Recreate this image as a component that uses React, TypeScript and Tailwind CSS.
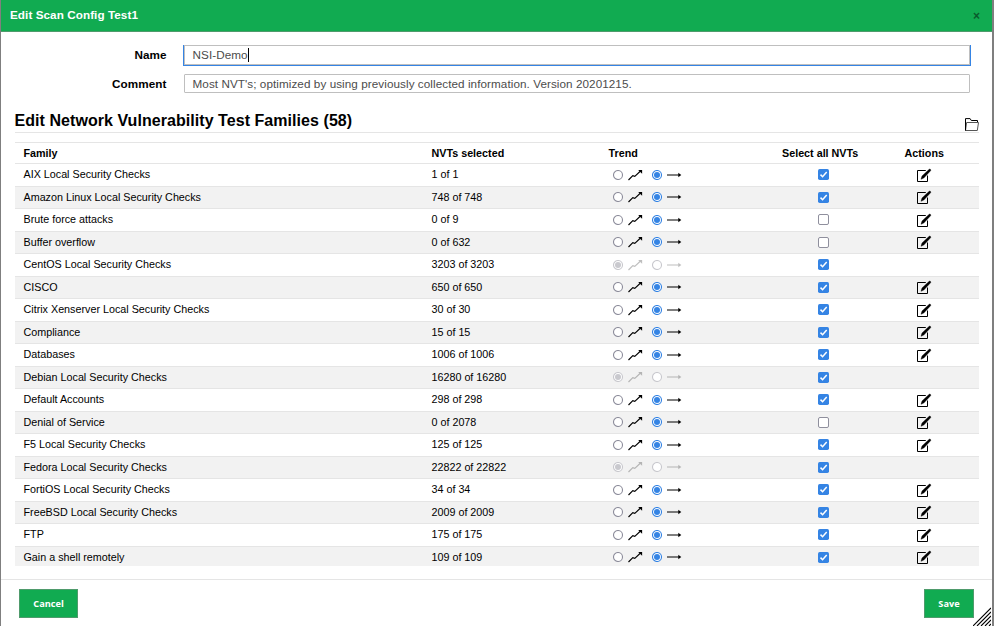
import React from 'react';

type Family = { name: string; count: string; locked?: boolean; all: boolean };

const f = (name: string, count: string, all = true, locked = false): Family => ({ name, count, all, locked });

const families: Family[] = [
  f('AIX Local Security Checks', '1 of 1'),
  f('Amazon Linux Local Security Checks', '748 of 748'),
  f('Brute force attacks', '0 of 9', false),
  f('Buffer overflow', '0 of 632', false),
  f('CentOS Local Security Checks', '3203 of 3203', true, true),
  f('CISCO', '650 of 650'),
  f('Citrix Xenserver Local Security Checks', '30 of 30'),
  f('Compliance', '15 of 15'),
  f('Databases', '1006 of 1006'),
  f('Debian Local Security Checks', '16280 of 16280', true, true),
  f('Default Accounts', '298 of 298'),
  f('Denial of Service', '0 of 2078', false),
  f('F5 Local Security Checks', '125 of 125'),
  f('Fedora Local Security Checks', '22822 of 22822', true, true),
  f('FortiOS Local Security Checks', '34 of 34'),
  f('FreeBSD Local Security Checks', '2009 of 2009'),
  f('FTP', '175 of 175'),
  f('Gain a shell remotely', '109 of 109'),
];

function Radio({ on, disabled }: { on: boolean; disabled?: boolean }) {
  const color = disabled ? '#c9c9ce' : on ? '#3584e4' : '#8f8f9d';
  return (
    <svg width="10" height="10" viewBox="0 0 10 10" className="block shrink-0">
      <circle cx="5" cy="5" r="4.5" fill="#fff" stroke={color} strokeWidth="1.1" />
      {on && <circle cx="5" cy="5" r="3" fill={color} />}
    </svg>
  );
}

function TrendUp({ faded }: { faded?: boolean }) {
  return (
    <svg width="15" height="12" viewBox="0 0 15 12" className={`block shrink-0 ${faded ? 'opacity-25' : ''}`}>
      <path d="M.5 11 4.8 6.6 6.8 7.4 12.5 2" fill="none" stroke="#000" strokeWidth="1.15" />
      <path d="M10.2.9h3.9v3.9z" fill="#000" />
    </svg>
  );
}

function TrendFlat({ faded }: { faded?: boolean }) {
  return (
    <svg width="15" height="6" viewBox="0 0 15 6" className={`block shrink-0 ${faded ? 'opacity-25' : ''}`}>
      <path d="M0 3h13" stroke="#000" strokeWidth="1" />
      <path d="M11.3.8 14.3 3l-3 2.2z" fill="#000" />
    </svg>
  );
}

function Check({ on }: { on: boolean }) {
  return (
    <svg width="11" height="11" viewBox="0 0 11 11" className="block shrink-0">
      {on ? (
        <>
          <rect width="11" height="11" rx="1.7" fill="#3584e4" />
          <path d="M2.5 5.6 4.6 7.7 8.7 3.1" fill="none" stroke="#fff" strokeWidth="1.5" />
        </>
      ) : (
        <rect x=".5" y=".5" width="10" height="10" rx="1.5" fill="#fff" stroke="#8f8f9d" />
      )}
    </svg>
  );
}

function EditIcon() {
  return (
    <svg width="15" height="15" viewBox="0 0 15 15" className="block shrink-0">
      <path d="M8.8 2.5H.5v11h10V7.5" fill="none" stroke="#000" strokeWidth="1" />
      <path d="m4 11.3 1-3.3 7.2-6.7q.7-.5 1.3.1t.1 1.3L6.8 10z" fill="#000" stroke="#000" strokeWidth=".4" />
    </svg>
  );
}

const columns = 'grid grid-cols-[408px_177px_173.5px_122.5px_74px] pl-[8.5px]';

export default function App() {
  return (
    <div className="flex h-[626px] w-[994px] overflow-hidden border-l border-[#7f7f7f] bg-[#7f7f7f] font-['Liberation_Sans',Arial,sans-serif] text-[10.76px] text-black">
      <div className="relative flex w-[991px] flex-col bg-white">
        <header className="flex h-8 shrink-0 items-center justify-between border-b border-[#4f9b6c] bg-[#11ab51] pr-[12px] pl-[9px] text-white">
          <h1 className="pb-[2px] text-[11.7px] leading-[17px] font-bold tracking-[0.07px]">Edit Scan Config Test1</h1>
          <button className="text-[12px] leading-none font-bold text-[#0a5a2c]">×</button>
        </header>

        <form className="flex flex-col pt-[13px] text-[11.7px] tracking-[0.07px]">
          <div className="flex h-[21px] items-center">
            <label className="w-[165.5px] pb-px text-right font-bold">Name</label>
            <div className="ml-[16.5px] h-[21px] w-[788px] bg-[#3584e4] px-px pb-px">
              <div className="flex h-5 items-center border border-[#bfbfbf] bg-white pl-[7.5px] text-[#4c4c4c]">
                NSI-Demo
                <span className="h-[14px] w-px bg-black" />
              </div>
            </div>
          </div>
          <div className="mt-2 flex h-[19px] items-center">
            <label className="w-[165.5px] pt-px text-right font-bold">Comment</label>
            <div className="ml-[17.5px] flex h-[19px] w-[786px] items-center rounded-[1px] border border-[#bfbfbf] pt-px pl-[7.5px] text-[#4c4c4c]">
              Most NVT's; optimized by using previously collected information. Version 20201215.
            </div>
          </div>
        </form>

        <section className="mt-[16px] ml-[14px] w-[964px]">
          <div className="flex h-[24px] items-start justify-between border-b border-[#e5e5e5]">
            <h2 className="-ml-[0.5px] text-[16px] leading-[23px] font-bold tracking-[0.055px]">Edit Network Vulnerability Test Families (58)</h2>
            <svg width="14" height="13" viewBox="0 0 14 13" className="mt-[9px]">
              <path d="M.5 12.5V.6h4.6l1.2 1.9h6.2v2" fill="none" stroke="#000" />
              <path d="M.5 12.5 1.6 4.5h11.9l-1.2 8z" fill="#fff" stroke="#555" />
              <path d="M.5 1v11.5" stroke="#000" />
            </svg>
          </div>

          <div className="mt-[9px] h-[424px] overflow-hidden">
            <div className={`${columns} h-[22px] items-center border-y border-[#e5e5e5] font-bold`}>
              <span>Family</span>
              <span>NVTs selected</span>
              <span>Trend</span>
              <span>Select all NVTs</span>
              <span>Actions</span>
            </div>
            {families.map((row) => (
              <div
                key={row.name}
                className={`${columns} h-[22.5px] items-center border-b border-[#e5e5e5] odd:bg-[#f2f2f2]`}
              >
                <span className="pb-[0.7px]">{row.name}</span>
                <span className="pb-[0.7px]">{row.count}</span>
                <span className="flex items-center pl-[4px]">
                  <Radio on={!!row.locked} disabled={row.locked} />
                  <span className="ml-[5px]"><TrendUp faded={row.locked} /></span>
                  <span className="ml-[9px]"><Radio on={!row.locked} disabled={row.locked} /></span>
                  <span className="ml-[5px]"><TrendFlat faded={row.locked} /></span>
                </span>
                <span className="pl-[36px]"><Check on={row.all} /></span>
                <span className="pt-[0.6px] pl-[12px]">{!row.locked && <EditIcon />}</span>
              </div>
            ))}
          </div>
        </section>

        <footer className="mt-[13px] flex h-[47px] items-start justify-between border-t border-[#e5e5e5] pt-[9px] pr-[18px] pl-[18px] font-['Open_Sans','Noto_Sans',sans-serif] text-[9.2px] font-bold text-white">
          <button className="h-[29px] w-[59px] border border-[#4f9b6c] bg-[#11ab51] pt-px">Cancel</button>
          <button className="h-[29px] w-[50px] border border-[#4f9b6c] bg-[#11ab51] pt-px">Save</button>
        </footer>
        <svg width="18" height="19" viewBox="0 0 18 19" className="absolute right-px bottom-0">
          <path d="M0 19 18 1M4 19 18 5M8 19 18 9M12 19l6-6M16 19l2-2" stroke="#000" strokeWidth="1.1" />
        </svg>
      </div>
    </div>
  );
}
